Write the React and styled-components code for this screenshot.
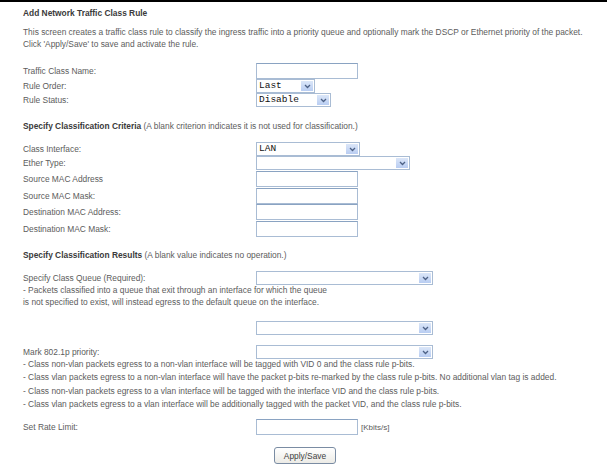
import styled, { createGlobalStyle } from "styled-components";

const GlobalStyle = createGlobalStyle`
  body {
    margin: 0;
    background: #ffffff;
    font-family: "Liberation Sans", Arial, sans-serif;
    font-size: 8.4px;
    color: #5c5c5c;
  }
`;

const Page = styled.div`
  border-top: 2px solid #000000;
  padding: 5px 0 0 23px;
  width: 584px;
`;

const Title = styled.div`
  font-weight: bold;
  color: #3a3a3a;
  line-height: 12px;
`;

const Text = styled.div`
  line-height: ${(p) => p.lh || 12}px;
  margin-top: ${(p) => p.mt || 0}px;
  white-space: nowrap;
`;

const Header = styled.div`
  line-height: 12px;
  margin-top: ${(p) => p.mt || 0}px;
  b {
    color: #3a3a3a;
  }
`;

const Form = styled.div`
  display: grid;
  grid-template-columns: 233px auto;
  margin-top: ${(p) => p.mt || 0}px;
  align-items: center;
`;

const Field = styled.div`
  display: flex;
  align-items: center;
  gap: 3px;
  padding-top: ${(p) => p.pt || 0}px;
`;

const Input = styled.div`
  box-sizing: border-box;
  width: 102px;
  height: 16px;
  border: 1px solid #a9bcd4;
  border-top-color: #8aa3c2;
  background: #ffffff;
`;

const SelectBox = styled.div`
  box-sizing: border-box;
  width: ${(p) => p.w}px;
  height: 14px;
  border: 1px solid #a9bcd4;
  background: #ffffff;
  display: flex;
  align-items: stretch;
`;

const SelectText = styled.span`
  flex: 1;
  font-family: "Liberation Mono", "DejaVu Sans Mono", monospace;
  font-size: 9.5px;
  line-height: 12px;
  color: #111111;
  padding-left: 2px;
`;

const Arrow = styled.span`
  width: 12px;
  margin: 1px;
  background: linear-gradient(#dbe6f8, #b9cdf2);
  display: flex;
  align-items: center;
  justify-content: center;
`;

const Unit = styled.span`
  font-size: 8px;
`;

const ButtonRow = styled.div`
  display: flex;
  padding-left: 251px;
  margin-top: 12px;
`;

const Button = styled.button`
  width: 62px;
  height: 17px;
  padding: 0;
  font-family: "Liberation Sans", Arial, sans-serif;
  font-size: 8.4px;
  color: #404040;
  border: 1px solid #7a8ca3;
  border-radius: 3px;
  background: linear-gradient(#ffffff, #ecebe6);
`;

function Select({ w, value }) {
  return (
    <SelectBox w={w}>
      <SelectText>{value}</SelectText>
      <Arrow>
        <svg width="7" height="5" viewBox="0 0 7 5">
          <path d="M1 1 L3.5 3.5 L6 1" fill="none" stroke="#4d6185" strokeWidth="1.3" />
        </svg>
      </Arrow>
    </SelectBox>
  );
}

function App() {
  return (
    <>
      <GlobalStyle />
      <Page>
        <Title>Add Network Traffic Class Rule</Title>
        <Text mt={7}>
          This screen creates a traffic class rule to classify the ingress traffic into a priority queue and
          optionally mark the DSCP or Ethernet priority of the packet.
        </Text>
        <Text>Click 'Apply/Save' to save and activate the rule.</Text>

        <Form mt={13}>
          <span>Traffic Class Name:</span>
          <Input />
          <span>Rule Order:</span>
          <Select w={59} value="Last" />
          <span>Rule Status:</span>
          <Select w={75} value="Disable" />
        </Form>

        <Header mt={13}>
          <b>Specify Classification Criteria</b> (A blank criterion indicates it is not used for classification.)
        </Header>

        <Form mt={10}>
          <span>Class Interface:</span>
          <Select w={104} value="LAN" />
          <span>Ether Type:</span>
          <Select w={154} value="" />
          <span>Source MAC Address</span>
          <Field pt={1}>
            <Input />
          </Field>
          <span>Source MAC Mask:</span>
          <Field pt={1}>
            <Input />
          </Field>
          <span>Destination MAC Address:</span>
          <Input />
          <span>Destination MAC Mask:</span>
          <Field pt={1}>
            <Input />
          </Field>
        </Form>

        <Header mt={12}>
          <b>Specify Classification Results</b> (A blank value indicates no operation.)
        </Header>

        <Form mt={10}>
          <span>Specify Class Queue (Required):</span>
          <Select w={177} value="" />
        </Form>
        <Text lh={12} mt={-1}>
          - Packets classified into a queue that exit through an interface for which the queue
        </Text>
        <Text lh={13}>is not specified to exist, will instead egress to the default queue on the interface.</Text>

        <Form mt={12}>
          <span />
          <Select w={177} value="" />
        </Form>

        <Form mt={10}>
          <span>Mark 802.1p priority:</span>
          <Select w={177} value="" />
        </Form>
        <Text lh={13.3} mt={-1}>
          - Class non-vlan packets egress to a non-vlan interface will be tagged with VID 0 and the class rule p-bits.
        </Text>
        <Text lh={13.3}>
          - Class vlan packets egress to a non-vlan interface will have the packet p-bits re-marked by the class rule
          p-bits. No additional vlan tag is added.
        </Text>
        <Text lh={13.3}>
          - Class non-vlan packets egress to a vlan interface will be tagged with the interface VID and the class rule
          p-bits.
        </Text>
        <Text lh={13.3}>
          - Class vlan packets egress to a vlan interface will be additionally tagged with the packet VID, and the class
          rule p-bits.
        </Text>

        <Form mt={8}>
          <span>Set Rate Limit:</span>
          <Field>
            <Input />
            <Unit>[Kbits/s]</Unit>
          </Field>
        </Form>

        <ButtonRow>
          <Button>Apply/Save</Button>
        </ButtonRow>
      </Page>
    </>
  );
}

export default App;
